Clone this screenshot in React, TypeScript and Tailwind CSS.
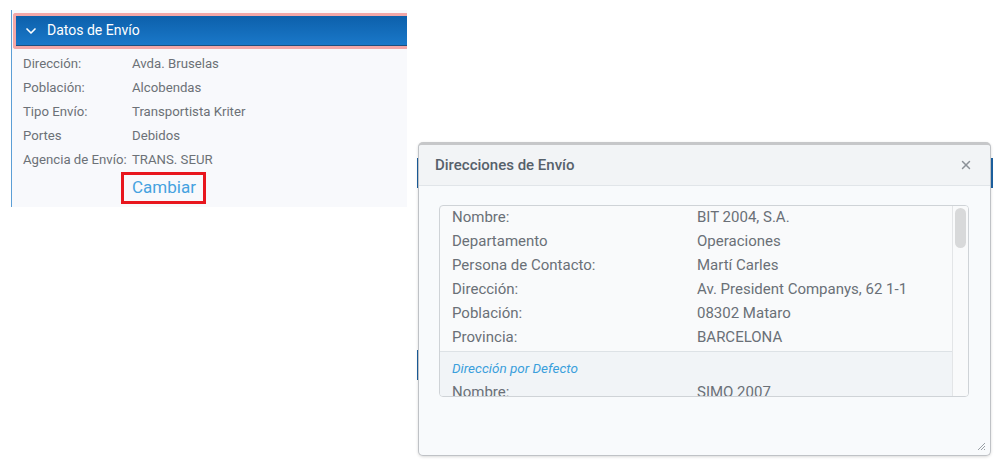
import { ChevronDown, X } from "lucide-react";

const envio = [
  ["Dirección:", "Avda. Bruselas"],
  ["Población:", "Alcobendas"],
  ["Tipo Envío:", "Transportista Kriter"],
  ["Portes", "Debidos"],
  ["Agencia de Envío:", "TRANS. SEUR"],
];

const direccion = [
  ["Nombre:", "BIT 2004, S.A."],
  ["Departamento", "Operaciones"],
  ["Persona de Contacto:", "Martí Carles"],
  ["Dirección:", "Av. President Companys, 62 1-1"],
  ["Población:", "08302 Mataro"],
  ["Provincia:", "BARCELONA"],
];

function DatosEnvio() {
  return (
    <div className="w-[407px] shrink-0 pl-[11px] pt-[10px]">
      <div className="h-[197px] overflow-hidden border-l border-[#5c9fd6] bg-[#f8f9fc] pr-[4px]">
        <div className="mt-[3px] mr-[-4px] ml-[1px] border-[3px] border-r-0 border-[#f2a7a8] rounded-l-[3px]">
          <div className="flex h-[30px] items-center gap-[8px] border-b border-[#1d4f7e] bg-gradient-to-b from-[#0c60ab] to-[#1a78c9] pl-[7px] text-[14px] text-white">
            <ChevronDown size={16} strokeWidth={2.5} />
            <span>Datos de Envío</span>
          </div>
        </div>
        <div className="pt-[3px] text-[13.2px] text-[#6c7177]">
          {envio.map(([label, value]) => (
            <div key={label} className="flex h-[24px] items-center pl-[11px]">
              <span className="w-[109px] shrink-0">{label}</span>
              <span>{value}</span>
            </div>
          ))}
          <div className="pl-[109px]">
            <div className="inline-flex h-[32px] w-[85px] items-center border-[3px] border-[#e8161e] pl-[8px] text-[17px] text-[#45a2e0]">
              Cambiar
            </div>
          </div>
        </div>
      </div>
    </div>
  );
}

function Row({ label, value }: { label: string; value: string }) {
  return (
    <div className="flex h-[24px] items-center pl-[12px]">
      <span className="w-[245px] shrink-0">{label}</span>
      <span>{value}</span>
    </div>
  );
}

function DireccionesModal() {
  return (
    <div className="mt-[142px] flex">
      <div className="flex w-[1px] flex-col">
        <div className="mt-[16px] h-[30px] bg-[#1b5e9c]" />
        <div className="mt-[162px] h-[30px] bg-[#1b5e9c]" />
      </div>
      <div className="flex h-[314px] w-[573px] flex-col overflow-hidden rounded-[5px] border border-t-[3px] border-[#bfc2c6] border-t-[#c6c7c9] bg-[#f8fafc] shadow-[0_1px_3px_rgba(0,0,0,0.15)]">
        <div className="flex h-[41px] shrink-0 items-center justify-between border-b border-[#e1e5e9] bg-[#f2f4f6] pr-[17px] pl-[16px]">
          <span className="text-[15px] font-medium text-[#56616b]">Direcciones de Envío</span>
          <X size={14} strokeWidth={2.5} className="text-[#8c9298]" />
        </div>
        <div className="relative flex-1 px-[20px] pt-[19px]">
          <div className="flex h-[192px] w-[530px] overflow-hidden rounded-[4px] border border-[#cfd3d7] bg-[#f9fafb] text-[15px] text-[#6a7077]">
            <div className="flex-1 overflow-hidden">
              <div className="mt-[-1px]">
                {direccion.map(([l, v]) => (
                  <Row key={l} label={l} value={v} />
                ))}
              </div>
              <div className="mt-[2px] h-full border-t border-[#dde2e6] bg-[#f1f4f7] pt-[4px]">
                <div className="flex h-[24px] items-center pl-[12px] text-[13.5px] italic text-[#3a9fdc]">
                  Dirección por Defecto
                </div>
                <Row label="Nombre:" value="SIMO 2007" />
              </div>
            </div>
            <div className="w-[16px] shrink-0 border-l border-[#e3e5e7] bg-[#f9fafb] pt-[2px] pl-[2px]">
              <div className="h-[40px] w-[11px] rounded-full bg-[#d8d9da]" />
            </div>
          </div>
          <svg
            className="absolute right-[4px] bottom-[4px]"
            width="10"
            height="10"
            viewBox="0 0 10 10"
          >
            <path d="M9 2 L2 9 M9 5 L5 9 M9 8 L8 9" stroke="#9aa0a6" strokeWidth="1" />
          </svg>
        </div>
      </div>
      <div className="flex w-[2px] flex-col">
        <div className="mt-[16px] h-[30px] bg-[#1b5e9c]" />
      </div>
    </div>
  );
}

export default function App() {
  return (
    <div className="flex h-[464px] w-[1001px] overflow-hidden bg-white font-['Roboto',sans-serif]">
      <DatosEnvio />
      <div className="w-[10px] shrink-0" />
      <DireccionesModal />
    </div>
  );
}
